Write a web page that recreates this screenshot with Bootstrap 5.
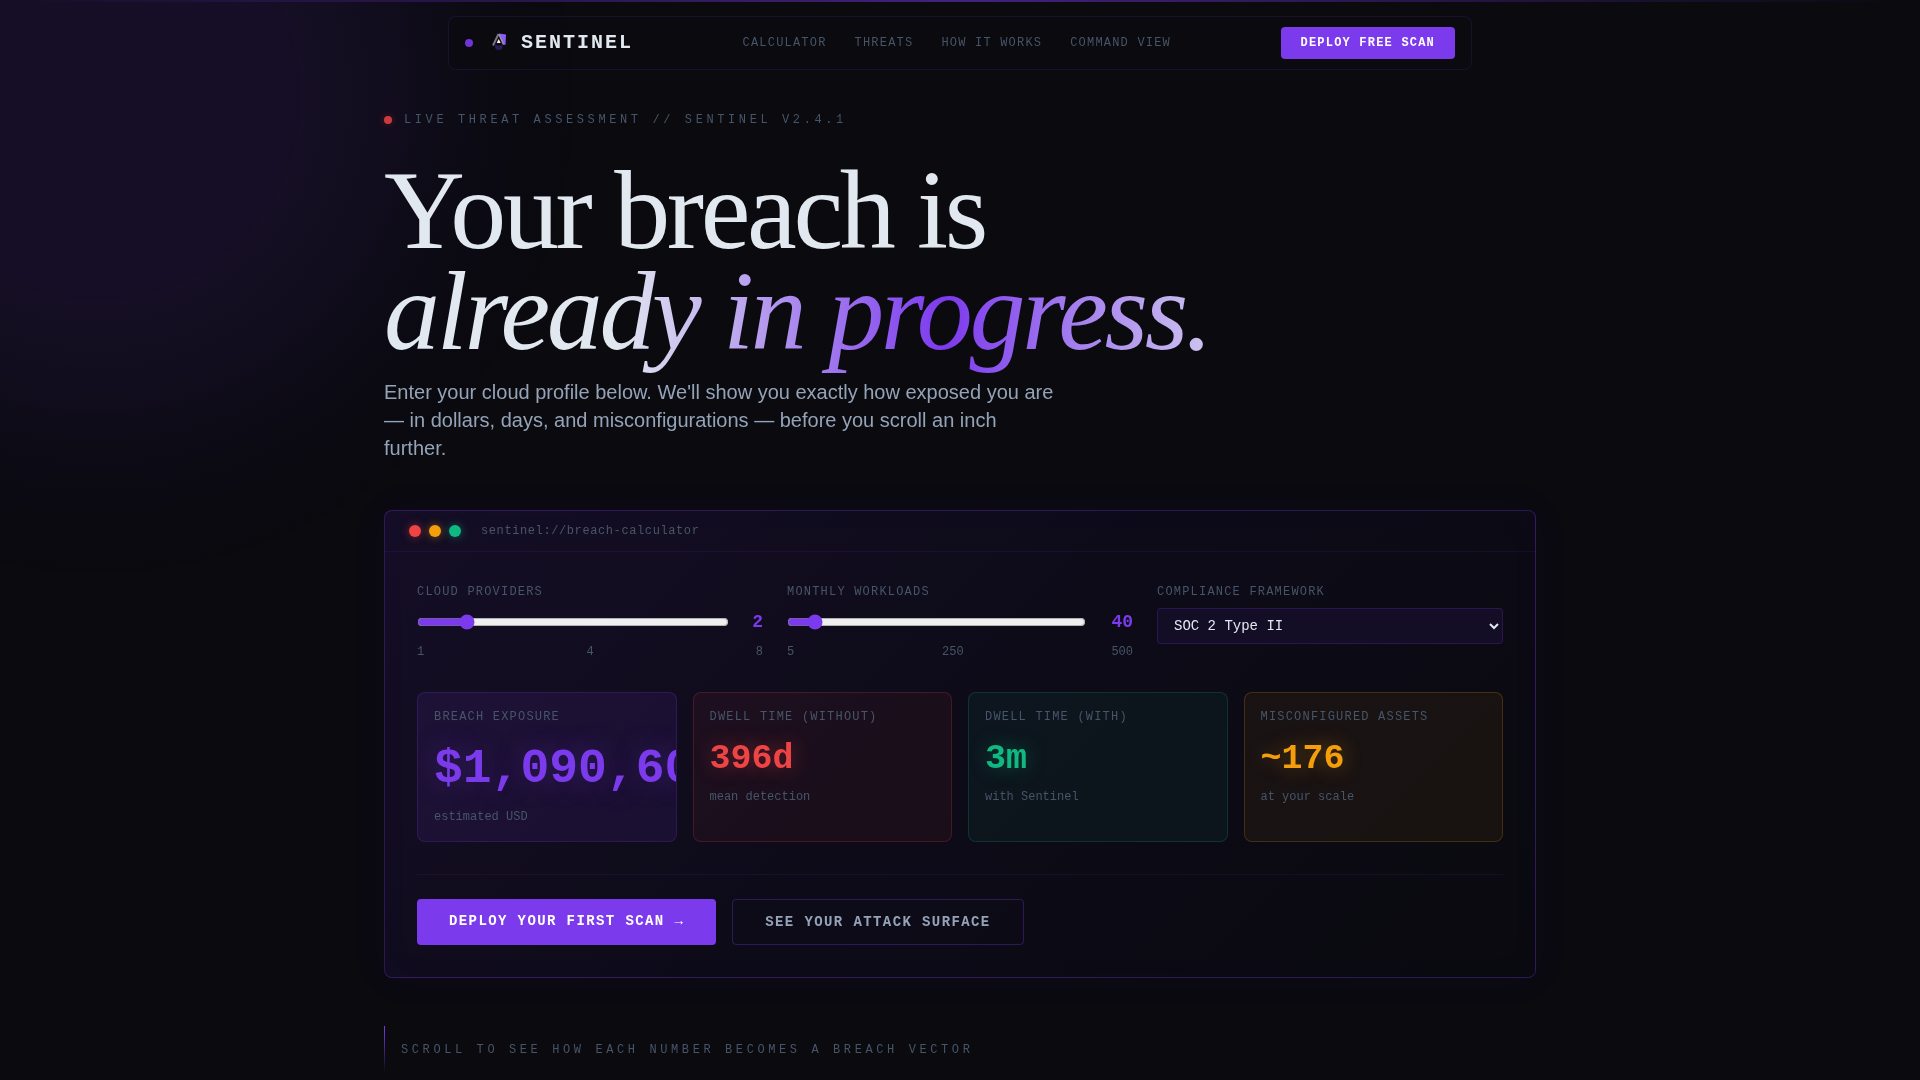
<!DOCTYPE html>
<html lang="en">
<head>
<meta charset="utf-8">
<meta name="viewport" content="width=device-width, initial-scale=1">
<title>Sentinel – Breach Calculator</title>
<link href="https://cdn.jsdelivr.net/npm/bootstrap@5.3.0/dist/css/bootstrap.min.css" rel="stylesheet">
<style>
  :root {
    --void: #0a0a0f;
    --violet: #7c3aed;
    --ice: #e2e8f0;
    --steel: #94a3b8;
    --dim: #475569;
  }
  body {
    background-color: var(--void);
    color: var(--ice);
    font-family: "Liberation Sans", Arial, sans-serif;
    overflow-x: hidden;
  }
  .mono { font-family: "Liberation Mono", "Courier New", monospace; }

  .ambient {
    position: fixed; inset: 0; z-index: -1; pointer-events: none;
    background: radial-gradient(circle at 96px 96px,
      rgba(124, 58, 237, .11) 0, rgba(124, 58, 237, .105) 190px,
      rgba(124, 58, 237, .065) 290px, rgba(124, 58, 237, .022) 380px,
      rgba(124, 58, 237, .006) 440px, transparent 490px);
  }
  .scanline {
    position: fixed; top: 0; left: 0; right: 0; height: 2px; z-index: 10;
    background: linear-gradient(90deg, transparent, var(--violet), transparent);
    opacity: .5;
  }

  .site-nav {
    max-width: 1024px;
    padding: 10px 16px;
    background: rgba(10, 10, 15, .8);
    border: 1px solid rgba(124, 58, 237, .15);
    border-radius: 8px;
  }
  .pulse { width: 8px; height: 8px; border-radius: 50%; flex: none; }
  .pulse-violet { background: var(--violet); opacity: .9; }
  .pulse-red { background: #ef4444; opacity: .85; box-shadow: 0 0 8px rgba(239, 68, 68, .4); }
  .brand-gap { gap: 16px; }
  .brand-link { gap: 12px; color: var(--ice); font-size: 20px; line-height: 24px; letter-spacing: .1em; }
  .link-row { gap: 28px; }
  .link-row a { color: var(--dim); }
  .tag-text { font-size: 12px; line-height: 16px; letter-spacing: .1em; }
  .wide-text { font-size: 12px; line-height: 16px; letter-spacing: .3em; color: var(--dim); }
  .cta {
    --bs-btn-color: #fff; --bs-btn-bg: var(--violet);
    --bs-btn-hover-color: #fff; --bs-btn-hover-bg: #6d28d9;
    --bs-btn-active-color: #fff; --bs-btn-active-bg: #5b21b6;
    border: 0; border-radius: 4px; letter-spacing: .1em;
  }
  .cta-sm { padding: 8px 20px; font-size: 12px; line-height: 16px; }
  .cta-lg { padding: 12px 32px; font-size: 14px; line-height: 20px; text-align: left; }
  .cta-ghost {
    --bs-btn-color: var(--steel); --bs-btn-bg: transparent;
    border: 1px solid rgba(124, 58, 237, .3);
  }

  .page { max-width: 1152px; padding-top: 42px; }
  .headline {
    font-family: "Liberation Serif", "Times New Roman", serif;
    font-size: 112px; line-height: 101px; letter-spacing: -.03em;
    font-weight: 400; color: var(--ice);
    margin: 32px 0 16px;
  }
  .headline em {
    background: linear-gradient(90deg, var(--ice) 28%, var(--violet) 68%, var(--ice) 108%);
    -webkit-background-clip: text; background-clip: text;
    color: transparent;
    padding-bottom: 8px;
  }
  .intro { max-width: 672px; font-size: 20px; line-height: 28px; color: var(--steel); margin-bottom: 48px; }

  .console {
    border: 1px solid rgba(124, 58, 237, .3);
    border-radius: 8px;
    background: linear-gradient(135deg, #150e26 0%, #0d0b18 50%, #0a0a0f 100%);
    box-shadow: 0 0 40px rgba(124, 58, 237, .05), inset 0 0 40px rgba(124, 58, 237, .02);
  }
  .console-bar { padding: 12px 24px; gap: 8px; border-bottom: 1px solid rgba(124, 58, 237, .1); }
  .lamp { width: 12px; height: 12px; border-radius: 50%; }
  .lamp-red { background: #ef4444; box-shadow: 0 0 8px rgba(239, 68, 68, .5); }
  .lamp-amber { background: #f59e0b; box-shadow: 0 0 8px rgba(245, 158, 11, .5); }
  .lamp-green { background: #10b981; box-shadow: 0 0 8px rgba(16, 185, 129, .5); }
  .console-path { margin-left: 12px; font-size: 12px; line-height: 16px; letter-spacing: .05em; color: var(--dim); }
  .console-body { padding: 32px; }
  .dim-text { color: var(--dim); }

  .field-row { display: grid; grid-template-columns: repeat(3, 1fr); gap: 24px; margin-bottom: 32px; }
  .field-label { display: block; margin-bottom: 8px; color: var(--dim); }
  .dial { gap: 16px; height: 28px; }
  .dial input { flex: 1; min-width: 0; height: 16px; accent-color: var(--violet); }
  .dial output { font-size: 18px; line-height: 28px; font-weight: 700; color: var(--violet); text-align: right; }
  .digits-1 { width: 18px; }
  .digits-2 { width: 31px; }
  .ticks { margin-top: 8px; font-size: 12px; line-height: 16px; color: var(--dim); }
  .framework {
    display: block; width: 100%; height: 36px; padding: 8px 12px;
    font-size: 14px; color: var(--ice);
    background: #140d26; border: 1px solid rgba(124, 58, 237, .22); border-radius: 4px;
  }

  .metric-row { display: grid; grid-template-columns: repeat(4, minmax(0, 1fr)); gap: 16px; }
  .metric { padding: 16px; border: 1px solid rgba(var(--tone), .2); border-radius: 8px; background: rgba(var(--tone), .06); overflow: hidden; }
  .metric-value { margin-top: 4px; font-size: 35px; line-height: 60px; font-weight: 700; color: rgb(var(--tone)); text-shadow: 0 0 20px rgba(var(--tone), .4); }
  .metric-main .metric-value { font-size: 48px; line-height: 80px; text-shadow: 0 0 30px rgba(var(--tone), .3); }
  .metric-note { font-size: 12px; line-height: 16px; color: var(--dim); }
  .tone-violet { --tone: 124, 58, 237; }
  .tone-violet.metric { background: rgba(var(--tone), .1); }
  .tone-red { --tone: 239, 68, 68; }
  .tone-green { --tone: 16, 185, 129; }
  .tone-amber { --tone: 245, 158, 11; }

  .action-row { margin-top: 32px; padding-top: 24px; gap: 16px; border-top: 1px solid rgba(124, 58, 237, .1); }
  .scroll-cue { margin-top: 48px; gap: 16px; }
  .cue-line { width: 1px; height: 48px; background: linear-gradient(180deg, var(--violet), transparent); }
  @media (max-width: 991px) {
    .page { padding-left: 16px; padding-right: 16px; }
    .field-row { grid-template-columns: 1fr; }
    .metric-row { grid-template-columns: repeat(2, minmax(0, 1fr)); }
    .headline { font-size: 56px; line-height: 56px; }
    .link-row { display: none !important; }
  }
</style>
</head>
<body>
<div class="ambient"></div>
<div class="scanline"></div>

<header class="pt-3">
  <nav class="site-nav mono mx-auto d-flex align-items-center justify-content-between" aria-label="Main">
    <div class="brand-gap d-flex align-items-center">
      <span class="pulse pulse-violet"></span>
      <a class="brand-link d-flex align-items-center fw-bold text-decoration-none" href="#">
        <svg width="20" height="20" viewBox="0 0 20 20" aria-hidden="true">
          <path d="M10 .5 L17 1.500 L16.500 12 L14.500 11.500Z" fill="#8b5cf6"/>
          <ellipse cx="9.800" cy="13.500" rx="3.800" ry="3.500" fill="#2b1a5c"/>
          <path d="M7 10 H13 L12.500 12.500 H7.500Z" fill="#0a0a0f"/>
          <path d="M9.500 1 L4 12.500" stroke="#77777f" stroke-width="2" fill="none"/>
          <path d="M9.800 1 L14.500 11.500" stroke="#9c93b0" stroke-width="1.500" fill="none"/>
          <path d="M9.700 6 L11.700 10 H7.700Z" fill="#fff8e8"/>
        </svg>
        <span>SENTINEL</span>
      </a>
    </div>
    <div class="link-row tag-text d-flex">
      <a class="text-decoration-none" href="#calculator">CALCULATOR</a>
      <a class="text-decoration-none" href="#threats">THREATS</a>
      <a class="text-decoration-none" href="#how">HOW IT WORKS</a>
      <a class="text-decoration-none" href="#command">COMMAND VIEW</a>
    </div>
    <button type="button" class="btn cta cta-sm fw-bold">DEPLOY FREE SCAN</button>
  </nav>
</header>

<main class="page mx-auto">
  <div class="wide-text mono d-flex align-items-center">
    <span class="pulse pulse-red me-1"></span>
    <span class="ms-2">LIVE THREAT ASSESSMENT // SENTINEL V2.4.1</span>
  </div>
  <h1 class="headline">Your breach is<br><em>already in progress.</em></h1>
  <p class="intro">Enter your cloud profile below. We'll show you exactly how exposed you are — in dollars, days, and misconfigurations — before you scroll an inch further.</p>

  <section class="console mono" id="calculator" aria-label="Breach calculator">
    <div class="console-bar d-flex align-items-center">
      <span class="lamp lamp-red"></span>
      <span class="lamp lamp-amber"></span>
      <span class="lamp lamp-green"></span>
      <span class="console-path">sentinel://breach-calculator</span>
    </div>
    <div class="console-body">
      <div class="field-row">
        <div>
          <label class="field-label tag-text" for="providers">CLOUD PROVIDERS</label>
          <div class="dial d-flex align-items-center">
            <input type="range" id="providers" min="1" max="8" value="2">
            <output class="digits-1" for="providers">2</output>
          </div>
          <div class="ticks d-flex justify-content-between"><span>1</span><span>4</span><span>8</span></div>
        </div>
        <div>
          <label class="field-label tag-text" for="workloads">MONTHLY WORKLOADS</label>
          <div class="dial d-flex align-items-center">
            <input type="range" id="workloads" min="5" max="500" step="5" value="40">
            <output class="digits-2" for="workloads">40</output>
          </div>
          <div class="ticks d-flex justify-content-between"><span>5</span><span>250</span><span>500</span></div>
        </div>
        <div>
          <label class="field-label tag-text" for="framework">COMPLIANCE FRAMEWORK</label>
          <select class="framework mono" id="framework">
            <option>SOC 2 Type II</option>
          </select>
        </div>
      </div>

      <div class="metric-row">
        <div class="metric metric-main tone-violet">
          <div class="tag-text dim-text">BREACH EXPOSURE</div>
          <div class="metric-value">$1,090,600</div>
          <div class="metric-note">estimated USD</div>
        </div>
        <div class="metric tone-red">
          <div class="tag-text dim-text">DWELL TIME (WITHOUT)</div>
          <div class="metric-value">396d</div>
          <div class="metric-note">mean detection</div>
        </div>
        <div class="metric tone-green">
          <div class="tag-text dim-text">DWELL TIME (WITH)</div>
          <div class="metric-value">3m</div>
          <div class="metric-note">with Sentinel</div>
        </div>
        <div class="metric tone-amber">
          <div class="tag-text dim-text">MISCONFIGURED ASSETS</div>
          <div class="metric-value">~176</div>
          <div class="metric-note">at your scale</div>
        </div>
      </div>

      <div class="action-row d-flex flex-wrap">
        <a class="btn cta cta-lg fw-bold" href="#deploy">DEPLOY YOUR FIRST SCAN →</a>
        <a class="btn cta cta-lg cta-ghost fw-bold" href="#threats">SEE YOUR ATTACK SURFACE</a>
      </div>
    </div>
  </section>

  <div class="scroll-cue wide-text mono d-flex align-items-center">
    <span class="cue-line"></span>
    <span>SCROLL TO SEE HOW EACH NUMBER BECOMES A BREACH VECTOR</span>
  </div>
</main>
<script src="https://cdn.jsdelivr.net/npm/bootstrap@5.3.0/dist/js/bootstrap.bundle.min.js"></script>
</body>
</html>
